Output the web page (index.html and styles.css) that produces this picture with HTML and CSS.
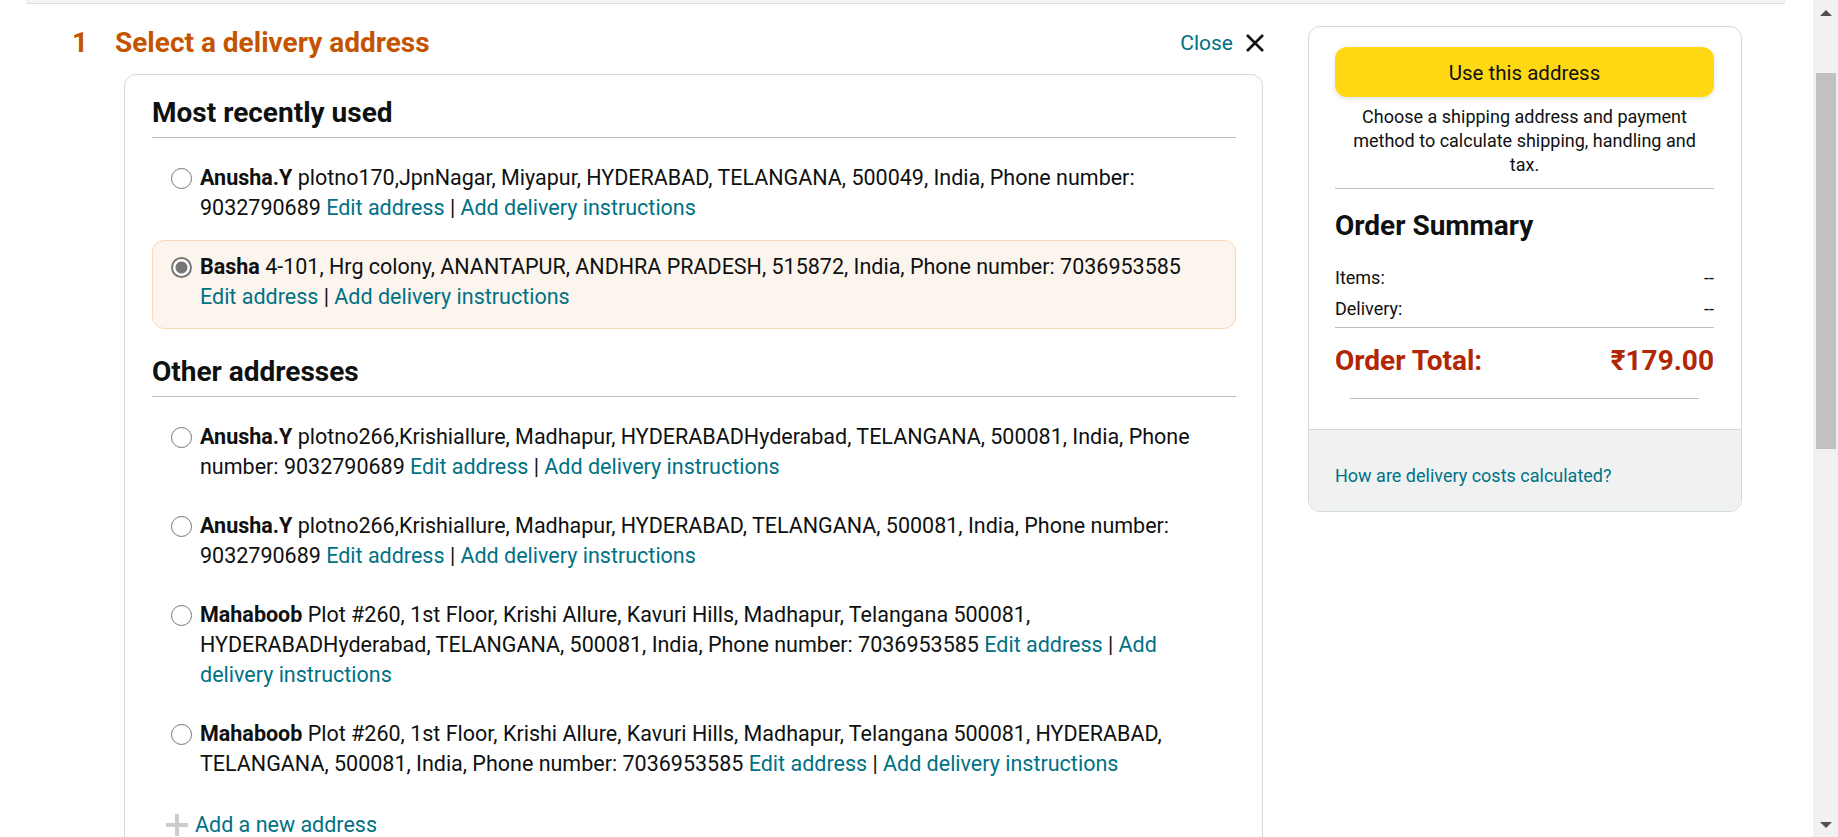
FILE: index.html
```html
<!DOCTYPE html>
<html lang="en">
<head>
<meta charset="utf-8">
<title>Select a delivery address</title>
<link rel="stylesheet" href="styles.css">
</head>
<body>
<div class="window">
  <div class="page">
    <div class="top-strip"></div>
    <div class="main">
      <section class="left">
        <div class="step-head">
          <span class="step-num">1</span>
          <h2 class="step-title">Select a delivery address</h2>
          <a class="close">
            <span>Close</span>
            <svg class="close-x" width="20" height="20" viewBox="0 0 20 20"><path d="M2 2 L18 18 M18 2 L2 18" stroke="#0f1111" stroke-width="2.6" fill="none"/></svg>
          </a>
        </div>
        <div class="addr-card">
          <h3 class="sec-title">Most recently used</h3>
          <div class="addr-list first">
            <div class="addr">
              <span class="radio"></span>
              <p class="addr-text"><b>Anusha.Y</b> plotno170,JpnNagar, Miyapur, HYDERABAD, TELANGANA, 500049, India, Phone number:<br>9032790689 <a class="lnk">Edit address</a> | <a class="lnk">Add delivery instructions</a></p>
            </div>
            <div class="addr selected">
              <span class="radio on"></span>
              <p class="addr-text"><b>Basha</b> 4-101, Hrg colony, ANANTAPUR, ANDHRA PRADESH, 515872, India, Phone number: 7036953585<br><a class="lnk">Edit address</a> | <a class="lnk">Add delivery instructions</a></p>
            </div>
          </div>
          <h3 class="sec-title other">Other addresses</h3>
          <div class="addr-list">
            <div class="addr">
              <span class="radio"></span>
              <p class="addr-text"><b>Anusha.Y</b> plotno266,Krishiallure, Madhapur, HYDERABADHyderabad, TELANGANA, 500081, India, Phone<br>number: 9032790689 <a class="lnk">Edit address</a> | <a class="lnk">Add delivery instructions</a></p>
            </div>
            <div class="addr">
              <span class="radio"></span>
              <p class="addr-text"><b>Anusha.Y</b> plotno266,Krishiallure, Madhapur, HYDERABAD, TELANGANA, 500081, India, Phone number:<br>9032790689 <a class="lnk">Edit address</a> | <a class="lnk">Add delivery instructions</a></p>
            </div>
            <div class="addr">
              <span class="radio"></span>
              <p class="addr-text"><b>Mahaboob</b> Plot #260, 1st Floor, Krishi Allure, Kavuri Hills, Madhapur, Telangana 500081,<br>HYDERABADHyderabad, TELANGANA, 500081, India, Phone number: 7036953585 <a class="lnk">Edit address</a> | <a class="lnk">Add<br>delivery instructions</a></p>
            </div>
            <div class="addr">
              <span class="radio"></span>
              <p class="addr-text"><b>Mahaboob</b> Plot #260, 1st Floor, Krishi Allure, Kavuri Hills, Madhapur, Telangana 500081, HYDERABAD,<br>TELANGANA, 500081, India, Phone number: 7036953585 <a class="lnk">Edit address</a> | <a class="lnk">Add delivery instructions</a></p>
            </div>
          </div>
          <a class="add-new">
            <svg class="plus" width="22" height="22" viewBox="0 0 22 22"><path d="M11 0 V22 M0 11 H22" stroke="#cccccc" stroke-width="4" fill="none"/></svg>
            <span>Add a new address</span>
          </a>
        </div>
      </section>

      <aside class="summary">
        <div class="summary-body">
          <button class="use-btn">Use this address</button>
          <p class="choose">Choose a shipping address and payment<br>method to calculate shipping, handling and<br>tax.</p>
          <h3 class="sum-title">Order Summary</h3>
          <div class="sum-rows">
            <div class="sum-row"><span>Items:</span><span>--</span></div>
            <div class="sum-row"><span>Delivery:</span><span>--</span></div>
          </div>
          <div class="total-row"><span>Order Total:</span><span>₹179.00</span></div>
          <div class="inset-rule"></div>
        </div>
        <div class="summary-foot">
          <a class="lnk small">How are delivery costs calculated?</a>
        </div>
      </aside>
    </div>
  </div>
  <div class="scrollbar">
    <div class="sb-btn"><span class="tri up"></span></div>
    <div class="sb-track"><div class="sb-thumb"></div></div>
    <div class="sb-btn"><span class="tri down"></span></div>
  </div>
</div>
</body>
</html>
```
FILE: styles.css
```css
* { box-sizing: border-box; }
html, body { margin: 0; padding: 0; }
body {
  background: #fff;
  color: #0f1111;
  font-family: Roboto, "Liberation Sans", Arial, sans-serif;
  font-size: 21.5px;
  line-height: 30px;
  overflow: hidden;
}
.window { display: flex; width: 1838px; height: 837px; overflow: hidden; }
.page { flex: 1; min-width: 0; }

.top-strip {
  margin: 0 28px 0 26px;
  height: 4px;
  background: #f2f2f2;
  border-bottom: 1px solid #dedede;
}

.main {
  display: flex;
  align-items: flex-start;
  padding: 22px 0 0 72px;
  gap: 43px;
}

/* left column */
.left { width: 1193px; flex: none; }
.step-head { display: flex; align-items: center; height: 34px; }
.step-num, .step-title {
  color: #c45500;
  font-size: 28px;
  font-weight: 700;
  line-height: 34px;
  margin: 0;
}
.step-num { width: 43px; }
.close {
  margin-left: auto;
  display: flex;
  align-items: center;
  gap: 12px;
  color: #007185;
  font-size: 21px;
}

.addr-card {
  margin: 14px 0 0 52px;
  width: 1139px;
  border: 1px solid #d5d9d9;
  border-radius: 12px;
  padding: 20px 26px 40px 27px;
}
.sec-title {
  margin: 0;
  font-size: 28px;
  font-weight: 700;
  line-height: 36px;
  padding-bottom: 6px;
  border-bottom: 1px solid #bbbfbf;
}
.sec-title.other { margin-top: 25px; }
.addr-list { margin-top: 13px; }
.addr {
  display: flex;
  align-items: flex-start;
  gap: 8px;
  padding: 11px 18px 16px 18px;
  border: 1px solid transparent;
  border-radius: 12px;
}
.addr.selected {
  background: #fcf5ee;
  border-color: #fbd8b4;
}
.radio {
  flex: none;
  width: 21px;
  height: 21px;
  margin-top: 5px;
  border: 1.5px solid #767676;
  border-radius: 50%;
  background: #fff;
}
.radio.on {
  border: 2px solid #767676;
  background: radial-gradient(circle, #767676 0 5.5px, #fff 6.5px);
}
.addr-text { margin: 0; }
.addr-text b { font-weight: 700; }
.lnk { color: #007185; text-decoration: none; }

.add-new {
  display: flex;
  align-items: center;
  gap: 7px;
  margin: 14px 0 0 14px;
  color: #007185;
}

/* summary */
.summary {
  width: 434px;
  flex: none;
  border: 1px solid #d5d9d9;
  border-radius: 12px;
  overflow: hidden;
}
.summary-body { padding: 20px 27px 30px 26px; }
.use-btn {
  display: block;
  width: 100%;
  height: 50px;
  border: none;
  border-radius: 12px;
  background: #ffd814;
  box-shadow: 0 2px 5px rgba(213, 217, 217, 0.7);
  color: #0f1111;
  font-family: inherit;
  font-size: 20.5px;
  padding: 2px 0 0;
}
.choose {
  margin: 8px 0 0;
  font-size: 18px;
  line-height: 24px;
  text-align: center;
  padding-bottom: 11px;
  border-bottom: 1px solid #bbbfbf;
}
.sum-title {
  margin: 19px 0 0;
  font-size: 28px;
  font-weight: 700;
  line-height: 36px;
}
.sum-rows {
  margin-top: 20px;
  font-size: 18px;
  line-height: 30px;
  border-bottom: 1px solid #bbbfbf;
  padding-bottom: 3px;
}
.sum-row { display: flex; justify-content: space-between; }
.sum-row:first-child { margin-top: -1px; margin-bottom: 1px; }
.total-row {
  display: flex;
  justify-content: space-between;
  margin-top: 15px;
  color: #b12704;
  font-size: 28px;
  font-weight: 700;
  line-height: 36px;
}
.inset-rule {
  margin: 19px 15px 0;
  border-top: 1px solid #bbbfbf;
}
.summary-foot {
  background: #f0f2f2;
  border-top: 1px solid #d5d9d9;
  padding: 33px 26px 23px;
  line-height: 24px;
}
.small { font-size: 18px; }

/* scrollbar */
.scrollbar {
  width: 25px;
  flex: none;
  background: #f1f1f1;
  display: flex;
  flex-direction: column;
}
.sb-btn {
  height: 25px;
  display: flex;
  align-items: center;
  justify-content: center;
  flex: none;
}
.tri { width: 0; height: 0; border-left: 6px solid transparent; border-right: 6px solid transparent; }
.tri.up { border-bottom: 6px solid #505050; }
.tri.down { border-top: 6px solid #505050; }
.sb-track { flex: 1; padding: 48px 2px 0 3px; }
.sb-thumb { height: 376px; background: #c1c1c1; }
```
